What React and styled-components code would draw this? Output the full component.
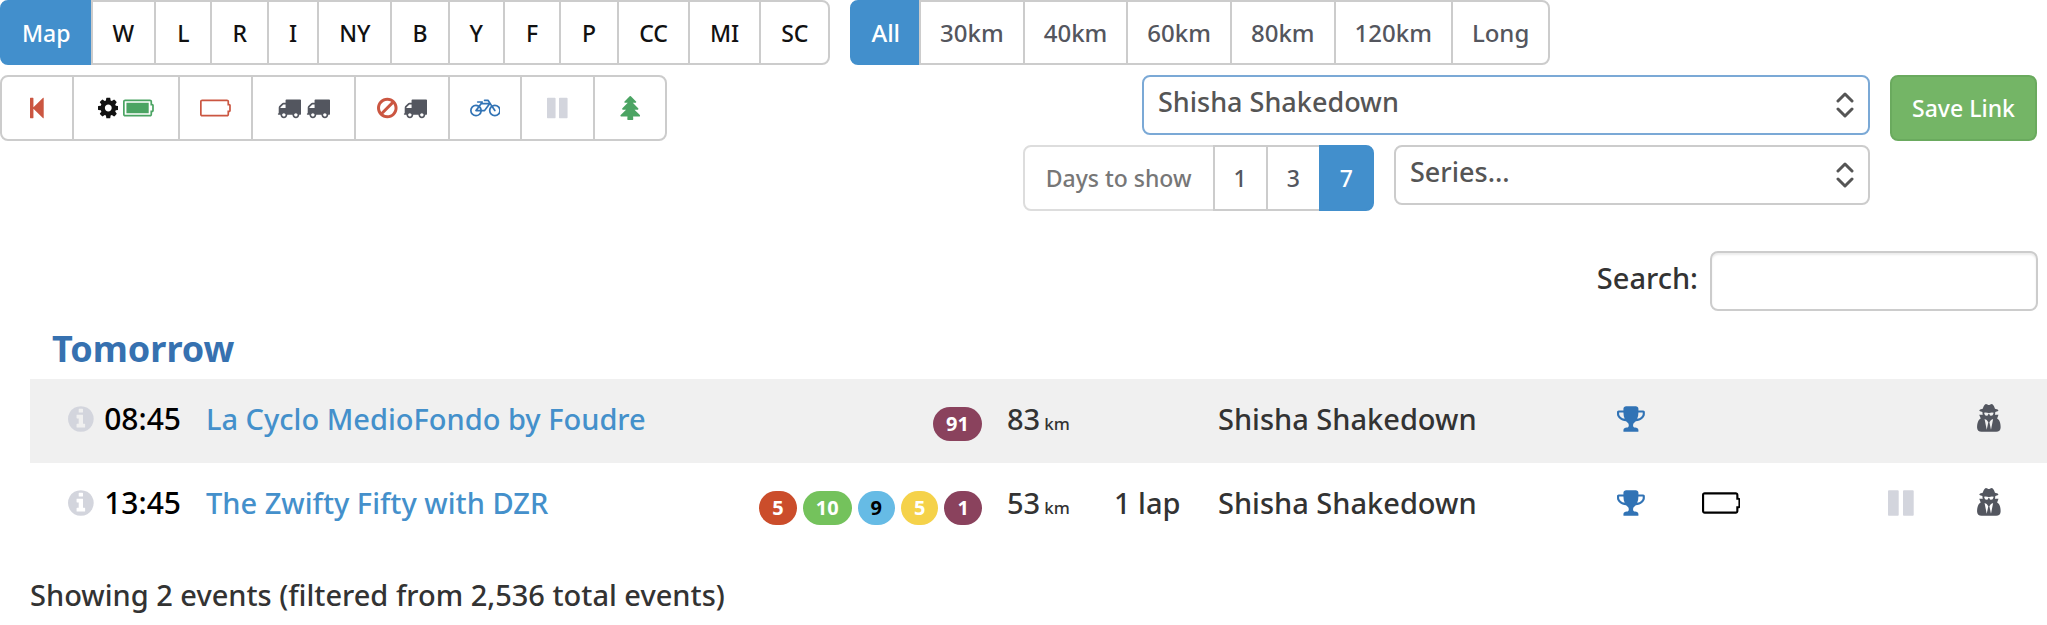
import React, { useState } from 'react'
import styled, { createGlobalStyle } from 'styled-components'

const GlobalStyle = createGlobalStyle`
  * {
    box-sizing: border-box;
  }
  body {
    margin: 0;
    background: #fff;
    color: #333;
    font-family: 'Noto Sans', 'Open Sans', sans-serif;
    font-size: 29px;
    font-weight: 500;
    line-height: 40px;
  }
  button,
  input,
  select {
    font-family: inherit;
    font-weight: inherit;
  }
`

const icons = {
  first: {
    box: '0 0 1024 1792',
    d:
      'M0 160q0-32 32-32h192q32 0 32 32v672L979 137q45-28 45 19v1480q0 47-45 19L256 960v672q0 32-32 32h-192q-32 0-32-32z'
  },
  cog: {
    box: '128 0 1536 1792',
    d:
      'M1152 896q0-106-75-181t-181-75-181 75-75 181 75 181 181 75 181-75 75-181zm512-109v222q0 12-8 23t-20 13l-185 28q-19 54-39 91 35 50 107 138 10 12 10 25t-9 23q-27 37-99 108t-94 71q-12 0-26-9l-138-108q-44 23-91 38-16 136-29 186-7 28-36 28h-222q-14 0-24.5-8.5t-11.5-21.5l-28-184q-49-16-90-37l-141 107q-10 9-25 9-14 0-25-11-126-114-165-168-7-10-7-23 0-12 8-23 15-21 51-66.5t54-70.5q-27-50-41-99l-183-27q-13-2-21-12.5t-8-23.5v-222q0-12 8-23t19-13l186-28q14-46 39-92-40-57-107-138-10-12-10-24 0-10 9-23 26-36 98.5-107.5t94.5-71.5q13 0 26 10l138 107q44-23 91-38 16-136 29-186 7-28 36-28h222q14 0 24.5 8.5t11.5 21.5l28 184q49 16 90 37l142-107q9-9 24-9 13 0 25 10 129 119 165 170 7 8 7 22 0 12-8 23-15 21-51 66.5t-54 70.5q26 50 41 98l183 28q13 2 21 12.5t8 23.5z'
  },
  batteryFull: {
    box: '0 -128 2304 1792',
    d:
      'M1920 384v768h-1664v-768h1664zm128 576h128v-384h-128v-288q0-14-9-23t-23-9h-1856q-14 0-23 9t-9 23v960q0 14 9 23t23 9h1856q14 0 23-9t9-23v-288zm256-384v384q0 53-37.5 90.5t-90.5 37.5v160q0 66-47 113t-113 47h-1856q-66 0-113-47t-47-113v-960q0-66 47-113t113-47h1856q66 0 113 47t47 113v160q53 0 90.5 37.5t37.5 90.5z'
  },
  batteryEmpty: {
    box: '0 -128 2304 1792',
    d:
      'M2048 960h128v-384h-128v-288q0-14-9-23t-23-9h-1856q-14 0-23 9t-9 23v960q0 14 9 23t23 9h1856q14 0 23-9t9-23v-288zm256-384v384q0 53-37.5 90.5t-90.5 37.5v160q0 66-47 113t-113 47h-1856q-66 0-113-47t-47-113v-960q0-66 47-113t113-47h1856q66 0 113 47t47 113v160q53 0 90.5 37.5t37.5 90.5z'
  },
  truck: {
    box: '0 0 1792 1792',
    d:
      'M640 1408q0-52-38-90t-90-38-90 38-38 90 38 90 90 38 90-38 38-90zm-384-512h384v-256h-158q-13 0-22 9l-195 195q-9 9-9 22v30zm1280 512q0-52-38-90t-90-38-90 38-38 90 38 90 90 38 90-38 38-90zm256-1088v1024q0 15-4 26.5t-13.5 18.5-16.5 11.5-23.5 6-22.5 2-25.5 0-22.5-.5q0 106-75 181t-181 75-181-75-75-181h-384q0 106-75 181t-181 75-181-75-75-181h-64q-3 0-22.5.5t-25.5 0-22.5-2-23.5-6-16.5-11.5-13.5-18.5-4-26.5q0-26 19-45t45-19v-320q0-8-.5-35t0-38 2.5-34.5 6.5-37 14-30.5 22.5-30l198-198q19-19 50.5-32t58.5-13h160v-192q0-26 19-45t45-19h1024q26 0 45 19t19 45z'
  },
  ban: {
    box: '128 0 1536 1792',
    d:
      'M1440 893q0-161-87-295l-754 753q137 89 297 89 111 0 211.5-43.5t173.5-116.5 116-174.5 43-212.5zm-999 299l755-754q-135-91-300-91-148 0-273 73t-198 199-73 274q0 162 89 299zm1223-299q0 157-61 300t-163.5 246-245 164-298.5 61-298.5-61-245-164-163.5-246-61-300 61-299.5 163.5-245.5 245-164 298.5-61 298.5 61 245 164 163.5 245.5 61 299.5z'
  },
  bicycle: {
    box: '0 -128 2304 1792',
    d:
      'M762 1024h-314q-40 0-57.5-35t6.5-67l188-251q-65-31-137-31-132 0-226 94t-94 226 94 226 226 94q115 0 203-72.5t111-183.5zm-186-128h186q-18-85-75-148zm480 0l288-384h-480l-99 132q105 103 126 252h165zm1120 64q0-132-94-226t-226-94q-60 0-121 24l174 260q15 23 10 49t-27 40q-15 11-36 11-35 0-53-29l-174-260q-93 95-93 225 0 132 94 226t226 94 226-94 94-226zm128 0q0 185-131.5 316.5t-316.5 131.5-316.5-131.5-131.5-316.5q0-97 39.5-183.5t109.5-149.5l-65-98-353 469q-18 26-51 26h-197q-23 164-149 274t-294 110q-185 0-316.5-131.5t-131.5-316.5 131.5-316.5 316.5-131.5q114 0 215 55l137-183h-224q-26 0-45-19t-19-45 19-45 45-19h384v128h435l-85-128h-222q-26 0-45-19t-19-45 19-45 45-19h256q33 0 53 28l267 400q91-44 192-44 185 0 316.5 131.5t131.5 316.5z'
  },
  pause: {
    box: '128 0 1536 1792',
    d:
      'M1664 192v1408q0 26-19 45t-45 19h-512q-26 0-45-19t-19-45v-1408q0-26 19-45t45-19h512q26 0 45 19t19 45zm-896 0v1408q0 26-19 45t-45 19h-512q-26 0-45-19t-19-45v-1408q0-26 19-45t45-19h512q26 0 45 19t19 45z'
  },
  tree: {
    box: '-32 0 1536 1792',
    d:
      'M1472 1472q0 26-19 45t-45 19h-462q1 17 6 87.5t5 108.5q0 25-18 42.5t-43 17.5h-320q-25 0-43-17.5t-18-42.5q0-38 5-108.5t6-87.5h-462q-26 0-45-19t-19-45 19-45l402-403h-229q-26 0-45-19t-19-45 19-45l402-403h-197q-26 0-45-19t-19-45 19-45l384-384q19-19 45-19t45 19l384 384q19 19 19 45t-19 45-45 19h-197l402 403q19 19 19 45t-19 45-45 19h-229l402 403q19 19 19 45z'
  },
  trophy: {
    box: '64 0 1664 1792',
    d:
      'M522 883q-74-162-74-371h-256v96q0 78 94.5 162t235.5 113zm1078-275v-96h-256q0 209-74 371 141-29 235.5-113t94.5-162zm128-128v128q0 71-41.5 143t-112 130-173 97.5-215.5 44.5q-42 54-95 95-38 34-52.5 72.5t-14.5 89.5q0 54 30.5 91t97.5 37q75 0 133.5 45.5t58.5 114.5v64q0 14-9 23t-23 9h-832q-14 0-23-9t-9-23v-64q0-69 58.5-114.5t133.5-45.5q67 0 97.5-37t30.5-91q0-51-14.5-89.5t-52.5-72.5q-53-41-95-95-113-5-215.5-44.5t-173-97.5-112-130-41.5-143v-128q0-40 28-68t68-28h288v-96q0-66 47-113t113-47h576q66 0 113 47t47 113v96h288q40 0 68 28t28 68z'
  },
  info: {
    box: '128 0 1536 1792',
    d:
      'M1152 1376v-160q0-14-9-23t-23-9h-96v-512q0-14-9-23t-23-9h-320q-14 0-23 9t-9 23v160q0 14 9 23t23 9h96v320h-96q-14 0-23 9t-9 23v160q0 14 9 23t23 9h448q14 0 23-9t9-23zm-128-896v-160q0-14-9-23t-23-9h-192q-14 0-23 9t-9 23v160q0 14 9 23t23 9h192q14 0 23-9t9-23zm640 416q0 209-103 385.5t-279.5 279.5-385.5 103-385.5-103-279.5-279.5-103-385.5 103-385.5 279.5-279.5 385.5-103 385.5 103 279.5 279.5 103 385.5z'
  },
  spy: {
    box: '0 0 1536 1792',
    d:
      'M640 1536l96-448-96-128-128-64zm256 0l128-640-128 64-96 128zm160-1010q-2-4-4-6-10-8-96-8-70 0-167 19-7 2-21 2t-21-2q-97-19-167-19-86 0-96 8-2 2-4 6 2 18 4 27 2 3 7.5 6.5t7.5 10.5q2 4 7.5 20.5t7 20.5 7.5 17 8.5 17 9 14 12 13.5 14 9.5 17.5 8 20.5 4 24.5 2q36 0 59-12.5t32.5-30 14.5-34.5 11.5-29.5 17.5-12.5h12q11 0 17.5 12.5t11.5 29.5 14.5 34.5 32.5 30 59 12.5q13 0 24.5-2t20.5-4 17.5-8 14-9.5 12-13.5 9-14 8.5-17 7.5-17 7-20.5 7.5-20.5q2-7 7.5-10.5t7.5-6.5q2-9 4-27zm416 879q0 121-73 190t-194 69h-874q-121 0-194-69t-73-190q0-61 4.5-118t19-125.5 37.5-123.5 63.5-103.5 93.5-74.5l-90-220h214q-22-64-22-128 0-12 2-32-194-40-194-96 0-57 210-99 17-62 51.5-134t70.5-114q32-37 76-37 30 0 84 31t84 31 84-31 84-31q44 0 76 37 36 42 70.5 114t51.5 134q210 42 210 99 0 56-194 96 7 81-20 160h214l-82 225q63 33 107.5 96.5t65.5 143.5 29 151.5 8 148.5z'
  }
}

const Glyph = styled.svg`
  display: inline-block;
  flex: none;
  width: auto;
  height: ${({ size }) => size}px;
  fill: ${({ color }) => color};
  vertical-align: -4px;
`

const Icon = ({ name, color, size = 24 }) => (
  <Glyph viewBox={icons[name].box} color={color} size={size} aria-hidden="true">
    <path d={icons[name].d} />
  </Glyph>
)

const Filters = styled.header`
  display: flex;
  flex-direction: column;
  gap: 10px;
  padding-right: 10px;
`
const Bar = styled.div`
  display: flex;
  align-items: flex-start;
  gap: 20px;
`
const Split = styled.div`
  display: flex;
  justify-content: space-between;
  align-items: flex-start;
`
const Pickers = styled.div`
  display: grid;
  grid-template-columns: auto 476px 147px;
  column-gap: 20px;
  row-gap: 4px;
  align-items: start;
`
const Group = styled.div`
  display: flex;
`
const Button = styled.button`
  display: flex;
  align-items: center;
  justify-content: center;
  gap: 5px;
  height: ${({ short }) => (short ? 65 : 66)}px;
  margin: 0 0 0 -2px;
  padding: 0 ${({ pad }) => pad || 20}px;
  border: 2px solid ${({ active }) => (active ? '#428fcc' : '#ccc')};
  background: ${({ active }) => (active ? '#428fcc' : '#fff')};
  color: ${({ active, ink }) => (active ? '#fff' : ink || '#54565e')};
  font-size: ${({ text }) => text || 23}px;
  line-height: 32px;
  white-space: nowrap;
  cursor: pointer;

  &:first-child {
    margin-left: 0;
    border-radius: 8px 0 0 8px;
  }
  &:last-child {
    border-radius: 0 8px 8px 0;
  }
  &:disabled {
    border-color: #ddd;
    color: #777;
    cursor: default;
  }
`
const SaveButton = styled.button`
  height: 66px;
  padding: 0;
  border: 2px solid #6aaa5e;
  border-radius: 8px;
  background: #74b566;
  color: #fff;
  font-size: 23px;
  line-height: 32px;
  cursor: pointer;
`
const SelectBox = styled.div`
  position: relative;
  grid-column: ${({ column }) => column};
  justify-self: ${({ width }) => (width ? 'end' : 'stretch')};
  width: ${({ width }) => (width ? `${width}px` : 'auto')};
`
const Select = styled.select`
  display: block;
  width: 100%;
  height: 60px;
  padding: 0 48px 8px 14px;
  border: 2px solid ${({ focused }) => (focused ? '#7ba9d6' : '#ccc')};
  border-radius: 8px;
  background: #fff;
  color: #555;
  font-size: 27px;
  appearance: none;
`
const Arrows = styled.svg`
  position: absolute;
  top: 17px;
  right: 15px;
  width: 20px;
  height: 26px;
  fill: none;
  stroke: #555;
  stroke-width: 3;
  stroke-linecap: round;
  stroke-linejoin: round;
  pointer-events: none;
`
const SearchRow = styled.div`
  display: flex;
  justify-content: flex-end;
  align-items: flex-start;
  gap: 12px;
  padding: 40px 9px 0 0;
`
const SearchLabel = styled.label`
  padding-top: 7px;
`
const SearchInput = styled.input`
  width: 328px;
  height: 60px;
  padding: 0 14px;
  border: 2px solid #ccc;
  border-radius: 8px;
  box-shadow: inset 0 2px 2px rgba(0, 0, 0, 0.08);
  font-size: 27px;
`
const Results = styled.main`
  padding-left: 30px;
`
const Table = styled.table`
  width: 100%;
  border-collapse: collapse;
  table-layout: fixed;
`
const Col = styled.col`
  width: ${({ size }) => (size ? `${size}px` : 'auto')};
`
const DayHeading = styled.th`
  height: 68px;
  padding: 8px 22px 0;
  color: #3671b0;
  font-size: 36px;
  font-weight: 700;
  text-align: left;
`
const Row = styled.tr`
  background: ${({ shaded }) => (shaded ? '#f0f0f0' : '#fff')};
`
const Cell = styled.td`
  height: 84px;
  padding: 0 ${({ pad = 15 }) => pad}px 5px;
  text-align: ${({ align }) => align || 'left'};
  white-space: nowrap;
`
const LastCell = styled(Cell)`
  padding-right: 30px;
`
const When = styled.div`
  display: flex;
  align-items: center;
  justify-content: flex-end;
  gap: 10px;
  color: #000;
  font-size: 30px;
`
const EventLink = styled.a`
  color: #4490cb;
  text-decoration: none;
`
const Badges = styled.div`
  display: flex;
  justify-content: flex-end;
  gap: 6px;
  padding-top: 11px;
`
const Badge = styled.span`
  padding: 0 13px;
  border-radius: 17px;
  background: ${({ fill }) => fill};
  color: ${({ ink }) => ink || '#fff'};
  font-size: 20px;
  font-weight: 700;
  line-height: 34px;
`
const Unit = styled.small`
  margin-left: 4px;
  font-size: 17px;
  line-height: 20px;
`
const Summary = styled.p`
  margin: 28px 0 0;
`

const worlds = ['Map', 'W', 'L', 'R', 'I', 'NY', 'B', 'Y', 'F', 'P', 'CC', 'MI', 'SC']
const distances = ['All', '30km', '40km', '60km', '80km', '120km', 'Long']
const days = ['1', '3', '7']

const worldPad = w => (['L', 'F', 'P'].includes(w) ? 21 : 20)

const red = '#cb5641'
const green = '#4ba463'
const blue = '#3173b5'
const slate = '#53565f'
const pale = '#d3d5dd'

const tools = [
  { label: 'First', icons: [['first', red]], pad: 28 },
  { label: 'Full power', icons: [['cog', '#111'], ['batteryFull', green]], pad: 24 },
  { label: 'No power-ups', icons: [['batteryEmpty', red]] },
  { label: 'Drafting', icons: [['truck', slate], ['truck', slate]], pad: 24 },
  { label: 'No drafting', icons: [['ban', red], ['truck', slate]], pad: 21 },
  { label: 'TT bikes', icons: [['bicycle', blue]] },
  { label: 'Paused', icons: [['pause', pale]], pad: 25 },
  { label: 'Trees', icons: [['tree', green]], pad: 25 }
]

const events = [
  {
    time: '08:45',
    name: 'La Cyclo MedioFondo by Foudre',
    badges: [['91', '#8a425d']],
    km: 83,
    laps: '',
    route: 'Shisha Shakedown'
  },
  {
    time: '13:45',
    name: 'The Zwifty Fifty with DZR',
    badges: [
      ['5', '#cb4d2b'],
      ['10', '#74c25c'],
      ['9', '#66bbe5', '#000'],
      ['5', '#f5d24a'],
      ['1', '#8a425d']
    ],
    km: 53,
    laps: '1 lap',
    route: 'Shisha Shakedown',
    noPowerUps: true,
    paused: true
  }
]

const UpDown = () => (
  <Arrows viewBox="0 0 20 26" aria-hidden="true">
    <path d="M3 9l7-7 7 7M3 17l7 7 7-7" />
  </Arrows>
)

const App = () => {
  const [world, setWorld] = useState('Map')
  const [distance, setDistance] = useState('All')
  const [range, setRange] = useState('7')

  return (
    <>
      <GlobalStyle />
      <Filters>
        <Bar>
          <Group>
            {worlds.map(w => (
              <Button
                key={w}
                short
                ink="#111"
                pad={worldPad(w)}
                active={w === world}
                onClick={() => setWorld(w)}
              >
                {w}
              </Button>
            ))}
          </Group>
          <Group>
            {distances.map(d => (
              <Button
                key={d}
                short
                text={24}
                pad={19}
                active={d === distance}
                onClick={() => setDistance(d)}
              >
                {d}
              </Button>
            ))}
          </Group>
        </Bar>
        <Split>
          <Group>
            {tools.map(tool => (
              <Button key={tool.label} pad={tool.pad} aria-label={tool.label}>
                {tool.icons.map(([name, color], i) => (
                  <Icon key={i} name={name} color={color} />
                ))}
              </Button>
            ))}
          </Group>
          <Pickers>
            <SelectBox column="1 / 3" width={728}>
              <Select focused aria-label="Route" defaultValue="Shisha Shakedown">
                <option>Shisha Shakedown</option>
              </Select>
              <UpDown />
            </SelectBox>
            <SaveButton>Save Link</SaveButton>
            <Group>
              <Button disabled pad={21}>
                Days to show
              </Button>
              {days.map(d => (
                <Button key={d} pad={19} active={d === range} onClick={() => setRange(d)}>
                  {d}
                </Button>
              ))}
            </Group>
            <SelectBox column="2">
              <Select aria-label="Series" defaultValue="Series...">
                <option>Series...</option>
              </Select>
              <UpDown />
            </SelectBox>
          </Pickers>
        </Split>
      </Filters>
      <SearchRow>
        <SearchLabel htmlFor="search">Search:</SearchLabel>
        <SearchInput id="search" type="search" />
      </SearchRow>
      <Results>
        <Table>
          <colgroup>
            <Col size={161} />
            <Col />
            <Col size={240} />
            <Col size={107} />
            <Col size={104} />
            <Col size={383} />
            <Col size={90} />
            <Col size={90} />
            <Col size={90} />
            <Col size={90} />
            <Col size={101} />
          </colgroup>
          <thead>
            <tr>
              <DayHeading colSpan={11}>Tomorrow</DayHeading>
            </tr>
          </thead>
          <tbody>
            {events.map((event, i) => (
              <Row key={event.time} shaded={i % 2 === 0}>
                <Cell pad={10}>
                  <When>
                    <Icon name="info" color={pale} size={30} />
                    {event.time}
                  </When>
                </Cell>
                <Cell>
                  <EventLink href="#event">{event.name}</EventLink>
                </Cell>
                <Cell pad={10}>
                  <Badges>
                    {event.badges.map(([count, fill, ink], key) => (
                      <Badge key={key} fill={fill} ink={ink}>
                        {count}
                      </Badge>
                    ))}
                  </Badges>
                </Cell>
                <Cell>
                  {event.km}
                  <Unit>km</Unit>
                </Cell>
                <Cell>{event.laps}</Cell>
                <Cell>{event.route}</Cell>
                <Cell align="center">
                  <Icon name="trophy" color={blue} size={30} />
                </Cell>
                <Cell align="center">
                  {event.noPowerUps && <Icon name="batteryEmpty" color="#000" size={30} />}
                </Cell>
                <Cell />
                <Cell align="center">
                  {event.paused && <Icon name="pause" color={pale} size={30} />}
                </Cell>
                <LastCell align="center">
                  <Icon name="spy" color={slate} size={30} />
                </LastCell>
              </Row>
            ))}
          </tbody>
        </Table>
        <Summary>Showing 2 events (filtered from 2,536 total events)</Summary>
      </Results>
    </>
  )
}

export default App
